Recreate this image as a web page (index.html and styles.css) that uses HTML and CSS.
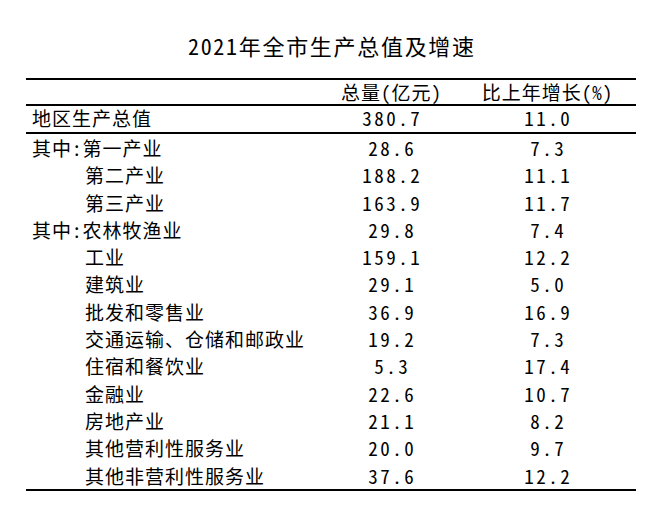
FILE: index.html
```html
<!DOCTYPE html>
<html lang="zh-CN">
<head>
<meta charset="utf-8">
<title>2021年全市生产总值及增速</title>
<link rel="stylesheet" href="styles.css">
</head>
<body>
<div class="sheet">
  <h1 class="title">2021年全市生产总值及增速</h1>
  <div class="table">
    <div class="row head">
      <div class="label"></div>
      <div class="num">总量(亿元)</div>
      <div class="num">比上年增长(%)</div>
    </div>
    <div class="row total">
      <div class="label">地区生产总值</div>
      <div class="num">380.7</div>
      <div class="num">11.0</div>
    </div>
    <div class="body">
      <div class="row"><div class="label">其中:第一产业</div><div class="num">28.6</div><div class="num">7.3</div></div>
      <div class="row"><div class="label sub">第二产业</div><div class="num">188.2</div><div class="num">11.1</div></div>
      <div class="row"><div class="label sub">第三产业</div><div class="num">163.9</div><div class="num">11.7</div></div>
      <div class="row"><div class="label">其中:农林牧渔业</div><div class="num">29.8</div><div class="num">7.4</div></div>
      <div class="row"><div class="label sub">工业</div><div class="num">159.1</div><div class="num">12.2</div></div>
      <div class="row"><div class="label sub">建筑业</div><div class="num">29.1</div><div class="num">5.0</div></div>
      <div class="row"><div class="label sub">批发和零售业</div><div class="num">36.9</div><div class="num">16.9</div></div>
      <div class="row"><div class="label sub">交通运输、仓储和邮政业</div><div class="num">19.2</div><div class="num">7.3</div></div>
      <div class="row"><div class="label sub">住宿和餐饮业</div><div class="num">5.3</div><div class="num">17.4</div></div>
      <div class="row"><div class="label sub">金融业</div><div class="num">22.6</div><div class="num">10.7</div></div>
      <div class="row"><div class="label sub">房地产业</div><div class="num">21.1</div><div class="num">8.2</div></div>
      <div class="row"><div class="label sub">其他营利性服务业</div><div class="num">20.0</div><div class="num">9.7</div></div>
      <div class="row"><div class="label sub">其他非营利性服务业</div><div class="num">37.6</div><div class="num">12.2</div></div>
    </div>
  </div>
</div>
</body>
</html>
```

FILE: styles.css
```css
html, body {
  margin: 0;
  padding: 0;
  background: #ffffff;
}

body {
  font-family: "Noto Sans CJK SC", "Noto Sans", sans-serif;
  font-feature-settings: "hwid";
  color: #000000;
}

.sheet {
  width: 610px;
  padding: 30px 0 0 26px;
}

.title {
  margin: 0;
  height: 48px;
  font-size: 22px;
  font-weight: normal;
  line-height: 30px;
  letter-spacing: 1.7px;
  padding-left: 1.7px;
  text-align: center;
}

.table {
  border-top: 2px solid #000;
  border-bottom: 2px solid #000;
  font-size: 19px;
}

.row {
  display: grid;
  grid-template-columns: 298px 134px 178px;
  height: 27.3px;
  line-height: 27.3px;
  white-space: nowrap;
}

.head {
  height: 24px;
  line-height: 24px;
  border-bottom: 2px solid #000;
}

.total {
  height: 26px;
  line-height: 24px;
  border-bottom: 2px solid #000;
}

.label {
  padding-left: 6px;
  letter-spacing: 1px;
}

.label.sub {
  padding-left: 59px;
}

.num {
  text-align: center;
  letter-spacing: 2.5px;
  padding-left: 2.5px;
}

.head .num {
  letter-spacing: 1px;
  padding-left: 1px;
}
```
